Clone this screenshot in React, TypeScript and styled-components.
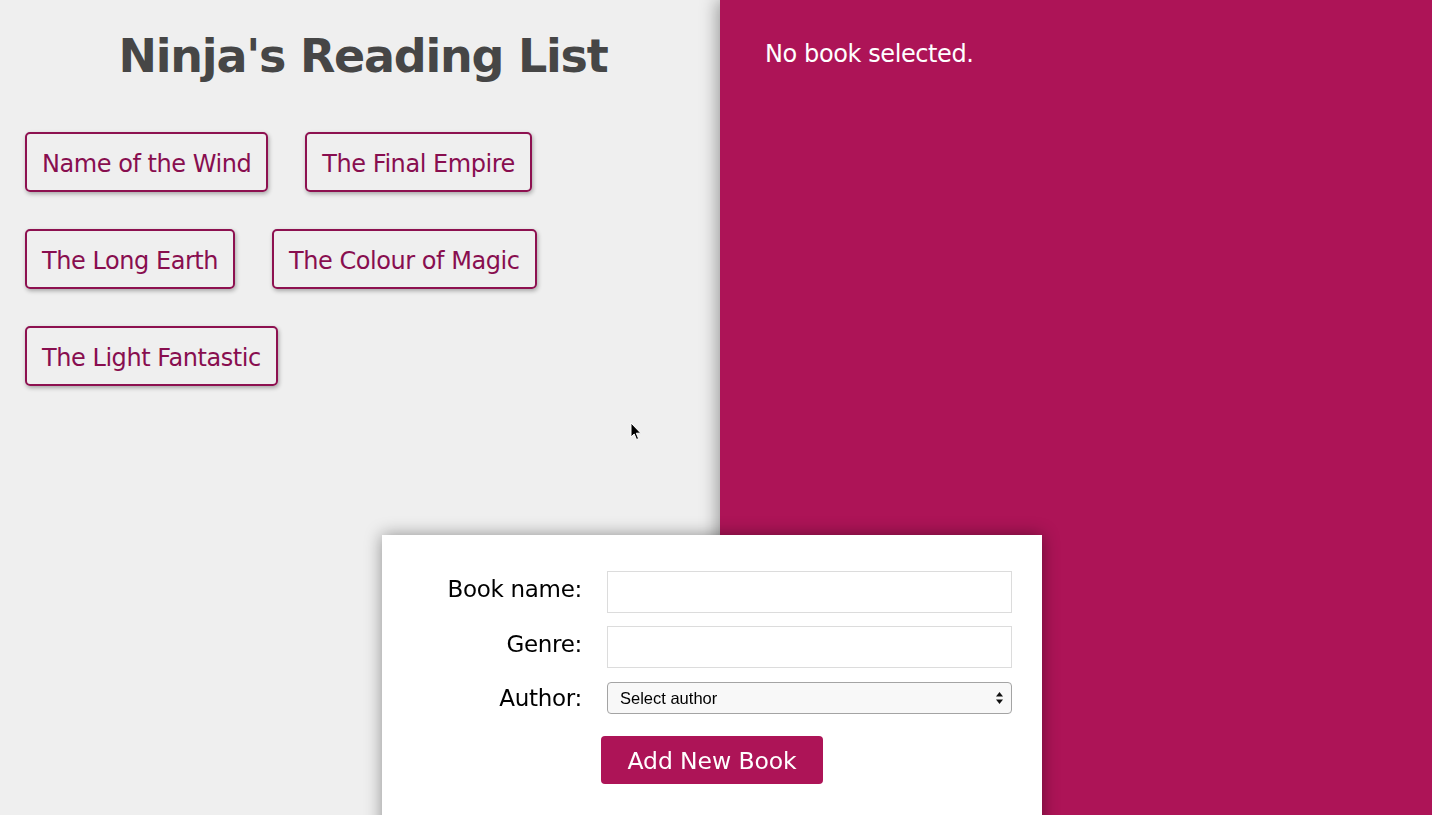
import React from "react";
import styled, { createGlobalStyle } from "styled-components";

const GlobalStyle = createGlobalStyle`
  html, body {
    margin: 0;
    padding: 0;
    height: 100%;
    overflow: hidden;
    background: #efefef;
    font-family: "DejaVu Sans", Verdana, sans-serif;
  }
  #root { height: 100%; }
  * { box-sizing: border-box; }
`;

const Page = styled.div`
  display: flex;
  height: 815px;
  width: 100%;
`;

const Main = styled.main`
  flex: 0 0 720px;
  background: #efefef;
  display: flex;
  flex-direction: column;
`;

const Title = styled.h1`
  margin: 0;
  padding: 29px 0 0 6px;
  text-align: center;
  color: #464646;
  font-size: 46px;
  font-weight: bold;
  letter-spacing: -1.25px;
  line-height: normal;
`;

const BookList = styled.ul`
  list-style: none;
  margin: 0;
  padding: 0 25px;
  margin-top: 49px;
  display: flex;
  flex-wrap: wrap;
  column-gap: 37px;
  row-gap: 37px;
  align-content: flex-start;
`;

const BookItem = styled.li`
  border: 2px solid #8d1150;
  border-radius: 5px;
  padding: 17px 15px 13px;
  line-height: 26px;
  font-size: 24px;
  letter-spacing: -0.45px;
  color: #880e4f;
  box-shadow: 1px 2px 4px rgba(0, 0, 0, 0.3);
  cursor: pointer;
`;

const Details = styled.aside`
  flex: 1;
  background: #ad1457;
  color: #fff;
  padding: 40px 45px;
  box-shadow: -3px 0 16px rgba(0, 0, 0, 0.35);
  position: relative;
  z-index: 1;
`;

const DetailsText = styled.p`
  margin: 0;
  font-size: 24px;
  letter-spacing: -0.4px;
  line-height: normal;
`;

const Form = styled.form`
  position: fixed;
  left: 382px;
  top: 535px;
  width: 660px;
  height: 300px;
  background: #fff;
  box-shadow: 0 0 16px rgba(0, 0, 0, 0.4);
  z-index: 2;
  padding: 36px 30px 0 30px;
`;

const Fields = styled.div`
  display: grid;
  grid-template-columns: 170px 405px;
  column-gap: 25px;
  row-gap: 13px;
  align-items: center;
`;

const Label = styled.label<{ $shift: number }>`
  text-align: right;
  font-size: 23px;
  letter-spacing: -0.3px;
  color: #000;
  line-height: 26px;
  margin-top: ${(p) => p.$shift}px;
`;

const TextInput = styled.input`
  height: 42px;
  width: 405px;
  border: 1px solid #dcdcdc;
  background: #fff;
  outline: none;
  padding: 0 8px;
  font-size: 16px;
`;

const SelectWrap = styled.div`
  position: relative;
  margin-top: 1px;
`;

const Select = styled.select`
  appearance: none;
  -webkit-appearance: none;
  width: 405px;
  height: 32px;
  border: 1.5px solid #a4a4a4;
  border-radius: 4px;
  background: #f8f8f8;
  color: #000;
  font-family: "Liberation Sans", Arial, sans-serif;
  font-size: 16.5px;
  padding: 0 0 0 12px;
  outline: none;
`;

const SelectArrows = styled.svg`
  position: absolute;
  right: 9px;
  top: 10px;
  pointer-events: none;
`;

const ButtonRow = styled.div`
  padding-left: 189px;
  margin-top: 22px;
`;

const SubmitButton = styled.button`
  height: 48px;
  width: 222px;
  border: 0;
  border-radius: 4px;
  background: #ad1457;
  color: #fff;
  font-family: "DejaVu Sans", Verdana, sans-serif;
  font-size: 23.5px;
  letter-spacing: -0.1px;
  padding: 2px 0 0;
  cursor: pointer;
`;

const Cursor = styled.svg`
  position: fixed;
  left: 630px;
  top: 422px;
  z-index: 3;
  pointer-events: none;
`;

const books = [
  "Name of the Wind",
  "The Final Empire",
  "The Long Earth",
  "The Colour of Magic",
  "The Light Fantastic",
];

export default function App() {
  return (
    <>
      <GlobalStyle />
      <Page>
        <Main>
          <Title>Ninja's Reading List</Title>
          <BookList>
            {books.map((b) => (
              <BookItem key={b}>{b}</BookItem>
            ))}
          </BookList>
        </Main>
        <Details>
          <DetailsText>No book selected.</DetailsText>
        </Details>
      </Page>
      <Form onSubmit={(e) => e.preventDefault()}>
        <Fields>
          <Label $shift={-6}>Book name:</Label>
          <TextInput type="text" />
          <Label $shift={-6}>Genre:</Label>
          <TextInput type="text" />
          <Label $shift={0}>Author:</Label>
          <SelectWrap>
            <Select defaultValue="">
              <option value="">Select author</option>
            </Select>
            <SelectArrows width="7" height="12" viewBox="0 0 7 12">
              <path d="M3.5 0 L7 4.5 L0 4.5 Z" fill="#111" />
              <path d="M0 7.5 L7 7.5 L3.5 12 Z" fill="#111" />
            </SelectArrows>
          </SelectWrap>
        </Fields>
        <ButtonRow>
          <SubmitButton type="submit">Add New Book</SubmitButton>
        </ButtonRow>
      </Form>
      <Cursor width="12" height="19" viewBox="0 0 12 19">
        <path
          d="M1 1 L1 15 L4.2 12 L6.5 17.5 L8.6 16.6 L6.3 11.2 L10.8 11.2 Z"
          fill="#000"
          stroke="#fff"
          strokeWidth="1"
        />
      </Cursor>
    </>
  );
}
